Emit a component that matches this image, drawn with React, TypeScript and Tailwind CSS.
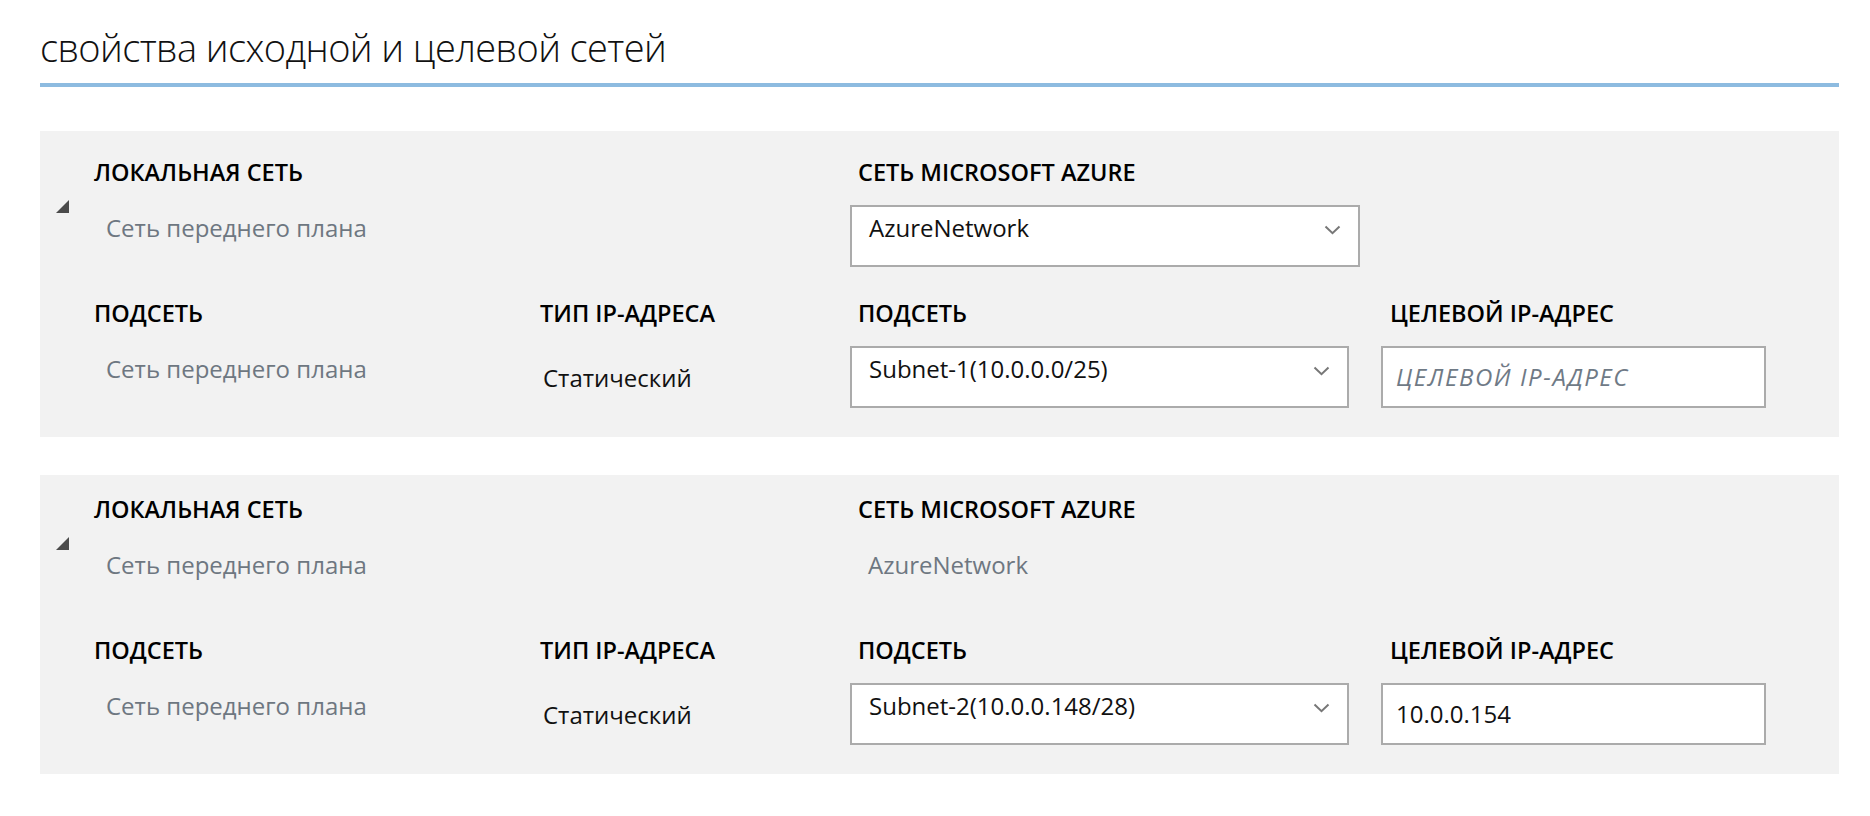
import React from 'react';

const FONT = "font-['Open_Sans','Noto_Sans',sans-serif]";

const Chevron = () => (
  <svg width="17" height="10" viewBox="0 0 17 10" className="mt-[13px] mr-[17px] shrink-0">
    <polyline points="1.5,1.5 8.5,8.2 15.5,1.5" fill="none" stroke="#777777" strokeWidth="2" />
  </svg>
);

const Triangle = () => (
  <svg width="13" height="13" viewBox="0 0 13 13">
    <polygon points="13,0 13,13 0,13" fill="#4b4b4b" />
  </svg>
);

const Label: React.FC<{ children: React.ReactNode; className?: string }> = ({ children, className = '' }) => (
  <div className={`text-[23.5px] leading-[32px] font-semibold text-black uppercase whitespace-nowrap ${className}`}>{children}</div>
);

const Select: React.FC<{ value: string; width: string }> = ({ value, width }) => (
  <div className={`${width} h-[62px] bg-white border-2 border-[#ababab] pt-[5px] flex items-start`}>
    <span className="ml-[17px] flex-1 text-[24px] leading-[32px] text-[#111] whitespace-nowrap">{value}</span>
    <Chevron />
  </div>
);

type Props = {
  top: string;
  azure: React.ReactNode;
  subnet: string;
  ip?: string;
};

const NetworkPanel: React.FC<Props> = ({ top, azure, subnet, ip }) => (
  <section className={`flex bg-[#f2f2f2] ${top} pb-[29px]`}>
    <div className="w-[54px] shrink-0 pl-[16px] pt-[44px]">
      <Triangle />
    </div>
    <div className="grid grid-cols-[446px_310px_531px_1fr] items-start">
      {/* row 1: labels */}
      <Label>Локальная сеть</Label>
      <div />
      <Label className="ml-[8px]">Сеть Microsoft Azure</Label>
      <div />

      {/* row 1: values */}
      <div className="mt-[24px] pl-[12px] text-[24px] leading-[32px] text-[#6e7781]">Сеть переднего плана</div>
      <div />
      <div className="mt-[17px] min-h-[62px]">{azure}</div>
      <div />

      {/* row 2: labels */}
      <Label className="mt-[30px]">Подсеть</Label>
      <Label className="mt-[30px]">Тип IP-адреса</Label>
      <Label className="mt-[30px] ml-[8px]">Подсеть</Label>
      <Label className="mt-[30px] ml-[9px]">Целевой IP-адрес</Label>

      {/* row 2: values */}
      <div className="mt-[24px] pl-[12px] text-[24px] leading-[32px] text-[#6e7781]">Сеть переднего плана</div>
      <div className="mt-[33px] pl-[3px] text-[24px] leading-[32px] text-[#111]">Статический</div>
      <div className="mt-[17px]">
        <Select value={subnet} width="w-[499px]" />
      </div>
      <div className="mt-[17px]">
        <div className="w-[385px] h-[62px] bg-white border-2 border-[#ababab] pl-[13px] flex items-center">
          {ip ? (
            <span className="text-[24px] leading-[32px] text-[#111]">{ip}</span>
          ) : (
            <span className="text-[24px] leading-[32px] italic tracking-[1.6px] text-[#6f7a86] uppercase whitespace-nowrap">
              Целевой IP-адрес
            </span>
          )}
        </div>
      </div>
    </div>
  </section>
);

export default function App() {
  return (
    <div className={`${FONT} bg-white min-h-[816px] pl-[40px] pr-[31px]`}>
      <h1 className="pt-[23px] pb-[12px] border-b-[4px] border-[#8dbbe0] text-[38px] leading-[48px] font-light tracking-[-0.6px] text-[#111]">
        свойства исходной и целевой сетей
      </h1>

      <div className="mt-[44px] flex flex-col gap-[38px]">
        <NetworkPanel
          top="pt-[25px]"
          azure={<Select value="AzureNetwork" width="w-[510px]" />}
          subnet="Subnet-1(10.0.0.0/25)"
        />
        <NetworkPanel
          top="pt-[18px]"
          azure={<div className="pt-[7px] pl-[18px] text-[24px] leading-[32px] text-[#6e7781]">AzureNetwork</div>}
          subnet="Subnet-2(10.0.0.148/28)"
          ip="10.0.0.154"
        />
      </div>
    </div>
  );
}
